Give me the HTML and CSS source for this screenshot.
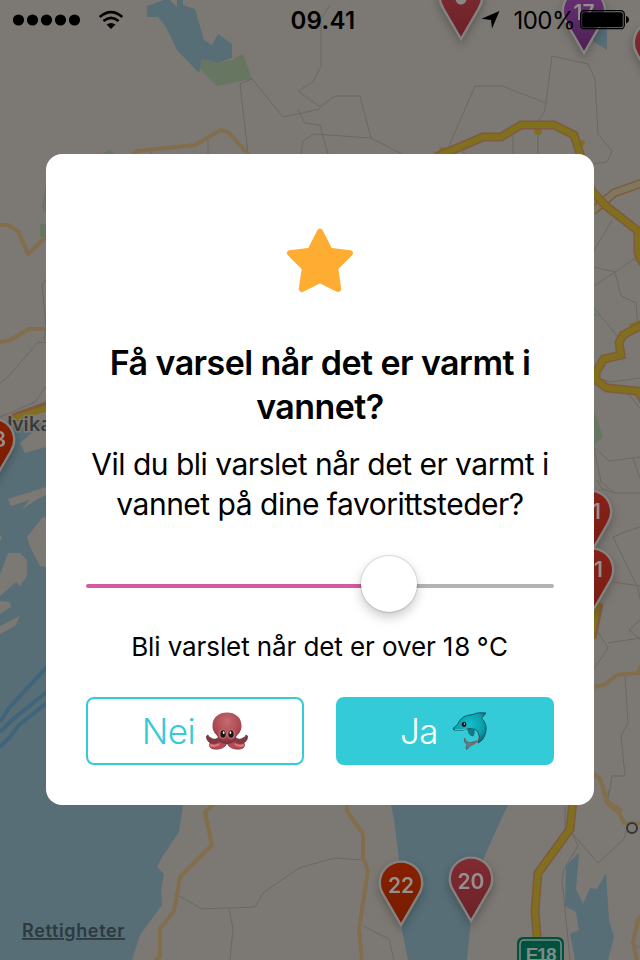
FILE: index.html
```html
<!DOCTYPE html>
<html lang="no">
<head>
    <meta charset="UTF-8">
    <meta name="viewport" content="width=device-width, initial-scale=1.0">
    <title>Varsel</title>
    <link rel="stylesheet" href="styles.css">
</head>
<body>
    <svg class="map" viewBox="0 0 640 960" width="640" height="960">
        <defs>
            <path id="pin" d="M0 -1L-18 -32A21.2 21.2 0 1 1 18 -32Z"/>
            <linearGradient id="orange" x1="0" y1="0" x2="0" y2="1"><stop offset="0" stop-color="#882100"/><stop offset="1" stop-color="#751c00"/></linearGradient>
            <linearGradient id="red" x1="0" y1="0" x2="0" y2="1"><stop offset="0" stop-color="#882117"/><stop offset="1" stop-color="#761d15"/></linearGradient>
            <linearGradient id="crimson" x1="0" y1="0" x2="0" y2="1"><stop offset="0" stop-color="#802b32"/><stop offset="1" stop-color="#6b2227"/></linearGradient>
            <linearGradient id="purple" x1="0" y1="0" x2="0" y2="1"><stop offset="0" stop-color="#693174"/><stop offset="1" stop-color="#4c2054"/></linearGradient>
        </defs>

        <!-- water -->
        <g class="water">
            <path d="M147 6L164 0H170L177 7V0H183V5L195 9L204 40L212 45L218 34L232 44V58L218 63L202 59L199 73L177 50L166 27L158 17H147Z"/>
            <path d="M604 0L607 10V50L594 42L580 28Z"/>
            <path d="M0 431L30 424L60 420V780H186L183 805L179 832L162 857L157 867L164 874L161 890L162 905L140 935L132 960H0Z"/>
            <path d="M390 800H511L503 815L483 860L471 920L467 960H408L399 915L400 868L394 819Z"/>
            <path d="M579 853L566 865L565 906L576 912L579 930L570 934L575 960H608L614 937L609 920L606 873L597 889L590 888L583 904L576 889Z"/>
        </g>
        <g class="shoal">
            <path d="M60 427L33 432L20 443L25 453L60 443Z"/>
            <path d="M8 499L46 487V495L36 500L21 510L30 500L11 506Z"/>
            <path d="M46 517L42 518L27 537L31 549L40 566L60 569V517Z"/>
            <path d="M8 553H20L27 560V576L20 586L16 582L0 596V575Z"/>
            <path d="M0 601L10 602L11 607L0 614ZM0 626L20 616L15 626L0 634Z"/>
            <path d="M0 535L2 538L0 541Z"/>
        </g>
        <path class="ferry" d="M0 722L9 708L47 667M0 732L12 720L48 691M0 747L11 736L19 725L48 702"/>

        <!-- parks -->
        <g class="park">
            <path d="M202 59L218 63L232 60L243 54L252 79L217 86L200 69Z"/>
            <path d="M46 183L42 207L48 218M46 224H40V237H48ZM102 154L109 150L115 154Z"/>
            <path d="M593 407L603 437L593 446ZM593 311L598 316H593Z"/>
        </g>

        <!-- small roads -->
        <path class="lane" d="M252 79L283 117L320 109M252 79L240 84L248 154M208 140V154M320 68L313 82L298 91L320 107L335 96H360L371 138L402 154M298 110L305 123L320 125L328 154M301 154L303 141L314 134L371 138M449 146L475 86H502L546 103L552 56L588 64L595 79L598 134L612 151L607 162L594 164M546 103L544 113L538 121V154M513 135V154M464 151V154M152 152L150 155M320 20L330 5M321 20V68"/>
        <path class="lane" d="M0 383L8 377L38 342L48 343M44 340L46 327L42 285L48 277M0 417L35 402L48 383"/>
        <path class="lane" d="M594 251L612 220M594 267L615 272L634 259L640 265M594 286L615 272L621 296L636 303L638 328M594 308L619 338M597 378L611 382L640 378M628 394L640 408M593 446L609 461L640 457M633 458L640 478M594 448L601 482L615 493H640M597 480L602 489L615 493M594 669L608 648L598 632V610M608 643L640 638M613 537L638 588L640 599M613 537L625 532L640 527M613 582L640 586M640 620L629 630L640 639M625 676L628 723L621 736L625 776H612L608 801"/>
        <path class="lane" d="M179 896L202 909L255 907L264 892L299 868L320 862L335 858L363 860M229 909L233 928L230 960M363 926L389 939L394 960M572 833L598 863L624 839L627 829M572 833L578 846L564 869L562 880L570 960M565 807V828M609 790L606 804M633 947H640"/>

        <!-- country roads -->
        <g class="road">
            <path d="M132 155L137 151L195 145L221 130L229 133L248 154"/>
            <path d="M0 225H8L18 231L28 254L46 237M0 342L8 341L29 329H48"/>
            <path d="M214 804L205 812L212 845L180 877L174 911L160 929V957L155 960"/>
            <path d="M347 804V811L363 834V858L368 870L359 930L362 960"/>
            <path d="M594 687L604 685L617 675L638 673L642 663M593 773L600 779L608 802L622 811M603 789L607 803L620 814L624 823H640M642 915L638 920L633 942L637 960"/>
        </g>

        <!-- motorways -->
        <g class="yellow"><circle cx="538" cy="131" r="4"/><circle cx="443" cy="151" r="4"/><circle cx="582" cy="143" r="3"/><path d="M634 257L640 250V265ZM628 325L640 320V328Z"/></g>
        <path class="pale-case" d="M593 211L614 193L642 183"/>
        <path class="pale" d="M593 211L614 193L642 183"/>
        <g class="motorway-case">
            <path d="M436 157L483 137H501L521 125H554L574 135L582 160L591 190L606 206L638 231V252L643 264M642 325L623 335L619 343L621 355L604 359L596 372V380L607 388L638 391L645 403M13 418L47 406M592 638L599 603M573 800L570 829L538 873L535 911L539 960"/>
        </g>
        <g class="motorway">
            <path d="M436 157L483 137H501L521 125H554L574 135L582 160L591 190L606 206L638 231V252L643 264M642 325L623 335L619 343L621 355L604 359L596 372V380L607 388L638 391L645 403M13 419L47 408M591 637L598 603M573 800L570 829L538 873L535 911L539 960"/>
        </g>
        <circle class="town" cx="632" cy="828" r="5"/>
        <text class="place" x="7" y="431">lvika</text>

        <rect x="517" y="937" width="47" height="34" rx="6" fill="#00523e"/>
        <rect x="520" y="940" width="41" height="31" rx="4" fill="#00523e" stroke="#7f8b86" stroke-width="1.5"/>
        <text class="shield" x="540.5" y="961">E18</text>

        <!-- temperature pins -->
        <g class="pin" transform="translate(461 40)"><use href="#pin" fill="url(#crimson)"/><circle cy="-41" r="5.5" fill="#8a8785"/></g>
        <g class="pin" transform="translate(584 54)"><use href="#pin" fill="url(#purple)"/><text y="-34">17</text></g>
        <g class="pin" transform="translate(655 86)"><use href="#pin" fill="url(#crimson)"/></g>
        <g class="pin" transform="translate(-7 483)"><use href="#pin" fill="url(#orange)"/><text y="-36">23</text></g>
        <g class="pin" transform="translate(590 555)"><use href="#pin" fill="url(#red)"/><text y="-36">21</text></g>
        <g class="pin" transform="translate(592 613)"><use href="#pin" fill="url(#red)"/><text y="-36">21</text></g>
        <g class="pin" transform="translate(401 926)"><use href="#pin" fill="url(#orange)"/><text y="-33">22</text></g>
        <g class="pin" transform="translate(471 922)"><use href="#pin" fill="url(#crimson)"/><text y="-33">20</text></g>
        <text class="legal" x="22" y="937">Rettigheter</text>
    </svg>

    <div class="screen">
        <header class="status">
            <div class="status-left">
                <svg width="68" height="12" viewBox="0 0 68 12"><circle cx="5.5" cy="6" r="5.6"/><circle cx="19.5" cy="6" r="5.6"/><circle cx="33.5" cy="6" r="5.6"/><circle cx="47.5" cy="6" r="5.6"/><circle cx="61.5" cy="6" r="5.6"/></svg>
                <svg class="wifi" width="26" height="20" viewBox="0 0 26 20"><path d="M1.7 7.1Q13 -2.8 24.3 7.1M5.4 11Q13 4.6 20.6 11" fill="none" stroke="#000" stroke-width="2.6"/><path d="M8.5 14.6Q13 11.2 17.5 14.6L13 19Z"/></svg>
            </div>
            <div class="time">09.41</div>
            <div class="status-right">
                <svg width="19" height="18" viewBox="0 0 19 18"><path d="M18.5 0L11 17.5L10 9L0.5 7.7Z"/></svg>
                <span>100%</span>
                <svg width="49" height="20" viewBox="0 0 49 20"><rect x="0.7" y="0.7" width="43.6" height="18" rx="3.5" fill="none" stroke="#000" stroke-width="1.3"/><rect x="2.2" y="2.2" width="40.6" height="15" rx="2"/><path d="M46 6Q49 7 49 9.7T46 13.4Z"/></svg>
            </div>
        </header>

        <main class="dialog">
            <svg class="star" width="68" height="66" viewBox="0 0 68 66"><path d="M34 4.7L43.8 23.8L64 26.2L49.2 41L52.2 62L34 53L15.8 62L18.8 41L4 26.2L24.2 23.8Z" fill="#ffac33" stroke="#ffac33" stroke-width="6" stroke-linejoin="round"/></svg>
            <h1>Få varsel når det er varmt i<br>vannet?</h1>
            <p class="question">Vil du bli varslet når det er varmt i<br>vannet på dine favorittsteder?</p>
            <div class="slider">
                <div class="filled"></div>
                <div class="knob"></div>
                <div class="rest"></div>
            </div>
            <p class="hint">Bli varslet når det er over <span>18&#8201;°C</span></p>
            <div class="buttons">
                <button class="no">
                    <span>Nei</span>
                    <svg width="42" height="38" viewBox="0 0 42 38">
                        <defs><radialGradient id="skin" cx=".5" cy=".3" r=".7"><stop offset="0" stop-color="#c66b70"/><stop offset=".65" stop-color="#ab4852"/><stop offset="1" stop-color="#71303a"/></radialGradient></defs>
                        <path d="M13 25Q9 29 5 26Q2 25 2 23L.5 24Q0 31 9 32Q15 32 17 26M29 25Q33 29 37 26Q40 25 40 23L41.5 24Q42 31 33 32Q27 32 25 26" fill="#823940" stroke="#63303a" stroke-width=".8"/>
                        <path d="M16 27Q11 33 4 31Q2 36 8 37Q18 38 21 31Q24 38 34 37Q40 36 38 31Q31 33 26 27Z" fill="#b84c54" stroke="#793540" stroke-width=".8"/>
                        <path d="M4 33Q9 35 13 32M38 33Q33 35 29 32" stroke="#ec777b" stroke-width="2" fill="none"/>
                        <path d="M6.5 14C6.5 5 13 .5 21 .5S35.5 5 35.5 14C35.5 20 32 22 30 25L28 30Q21 34 14 30L12 25C10 22 6.5 20 6.5 14Z" fill="url(#skin)"/>
                        <ellipse cx="16.8" cy="22" rx="4.2" ry="5" fill="#c9686b"/><ellipse cx="25.2" cy="22" rx="4.2" ry="5" fill="#c9686b"/>
                        <ellipse cx="17" cy="22" rx="2.6" ry="3.8" fill="#171717"/><ellipse cx="25" cy="22" rx="2.6" ry="3.8" fill="#171717"/>
                        <ellipse cx="17.7" cy="20.7" rx=".9" ry="1.4" fill="#eee"/><ellipse cx="24.4" cy="20.7" rx=".9" ry="1.4" fill="#eee"/>
                    </svg>
                </button>
                <button class="yes">
                    <span>Ja</span>
                    <svg width="36" height="38" viewBox="0 0 36 38">
                        <defs><radialGradient id="body" cx=".5" cy=".4" r=".65"><stop offset="0" stop-color="#12c1ce"/><stop offset=".65" stop-color="#0b9eab"/><stop offset="1" stop-color="#165f6a"/></radialGradient></defs>
                        <path d="M24 17Q29 24 25 28Q21 31 15 31L19 34Q28 32 31 25Q30 20 24 17Z" fill="#8b9293"/>
                        <path d="M1 16.5L5.5 12.5Q9 3 21 2.5Q25 0 34 1Q32 4 29.5 6Q36 13 33.5 21Q32 28 26 31Q29 25 26 20Q24 16.5 18 16.5Q10 19 2 18Z" fill="url(#body)" stroke="#145b65" stroke-width="1"/>
                        <path d="M22 29.5Q19 31 17 30.5Q14 30 12.5 26Q11 30 15 32.5Q13 35 14.5 37.5Q18 35 19 33Q23 32 25 29Z" fill="#70787b" stroke="#4e5c60" stroke-width=".7"/>
                        <path d="M16 17Q16 23 21 24Q23 21 22 18Z" fill="#07808c" stroke="#145b65" stroke-width=".7"/>
                        <path d="M3 17.5Q10 18 15 17" stroke="#8ba8aa" fill="none"/>
                        <circle cx="12" cy="12.5" r="2.4" fill="#111"/><circle cx="12.5" cy="12" r=".8" fill="#ddd"/>
                    </svg>
                </button>
            </div>
        </main>
    </div>
</body>
</html>
```
FILE: styles.css
```css
* {
    box-sizing: border-box;
}
body {
    margin: 0;
    background: #7c7974;
    font-family: Inter, "Liberation Sans", sans-serif;
    color: #000;
}
svg {
    display: block;
}
/* the map lies dimmed behind the dialog */
.map {
    position: absolute;
    top: 0;
    left: 0;
    z-index: -1;
}
.water {
    fill: #576e77;
}
.shoal {
    fill: #7c7974;
}
.ferry {
    fill: none;
    stroke: #40647b;
    stroke-width: 4;
}
.park {
    fill: #667661;
}
.lane {
    fill: none;
    stroke: #6a6863;
    stroke-width: 1;
}
.road {
    fill: none;
    stroke: #826e4c;
    stroke-width: 4;
}
.yellow {
    fill: #80701e;
}
.motorway, .motorway-case, .pale, .pale-case {
    fill: none;
    stroke: #80701e;
    stroke-width: 6;
}
.motorway-case, .pale-case {
    stroke: #80593f;
    stroke-width: 9;
}
.pale {
    stroke: #7e795e;
}
.town {
    fill: #7c7974;
    stroke: #353535;
    stroke-width: 2;
}
.place {
    font: 600 20px "Open Sans", sans-serif;
    fill: #383838;
    stroke: #7c7974;
    stroke-width: 3;
    paint-order: stroke;
}
.shield {
    font: bold 19px "Liberation Sans", sans-serif;
    letter-spacing: -1.5px;
    fill: #818a86;
    text-anchor: middle;
}
.pin {
    filter: drop-shadow(0 4px 4px rgba(0, 0, 0, 0.25));
}
.pin use {
    stroke: #85827f;
    stroke-width: 2.4;
}
.pin text {
    font-size: 21px;
    font-weight: 600;
    fill: #95908e;
    text-anchor: middle;
}
.legal {
    font-size: 18px;
    font-weight: 600;
    letter-spacing: 0.65px;
    fill: #2c3a3f;
    text-decoration: underline;
}
.screen {
    display: flex;
    flex-direction: column;
    align-items: center;
    height: 960px;
}
.status {
    display: grid;
    grid-template-columns: 1fr auto 1fr;
    align-items: center;
    width: 100%;
    height: 40px;
    padding: 0 11px 0 13px;
    font-size: 24px;
}
.status-left, .status-right {
    display: flex;
    align-items: center;
}
.wifi {
    margin-left: 17px;
}
.time {
    padding: 1px 0 0 4px;
    font-weight: 600;
    letter-spacing: 0.3px;
}
.status-right {
    justify-content: flex-end;
}
.status-right span {
    margin: 1px 5px 0 13px;
    letter-spacing: -0.5px;
}
.dialog {
    display: flex;
    flex-direction: column;
    align-items: center;
    width: 548px;
    height: 651px;
    margin-top: 114px;
    padding: 73px 40px 40px;
    background: #fff;
    border-radius: 16px;
    text-align: center;
    white-space: nowrap;
}
h1 {
    margin: 48px 0 0;
    font-size: 34px;
    font-weight: 600;
    line-height: 44px;
    letter-spacing: -0.55px;
}
.question {
    margin: 15px 0 0;
    font-size: 30px;
    line-height: 40px;
    letter-spacing: -0.5px;
    font-variant-ligatures: none;
}
.slider {
    display: flex;
    align-items: center;
    width: 100%;
    height: 56px;
    margin-top: 32px;
}
.filled {
    width: 276px;
    height: 4px;
    margin-top: 4px;
    background: #d35ba3;
    border-radius: 2px 0 0 2px;
}
.knob {
    width: 56px;
    height: 56px;
    margin: 0 -1px;
    border-radius: 50%;
    background: #fff;
    box-shadow: 0 0 1px 1px rgba(0, 0, 0, 0.12), 0 5px 12px rgba(0, 0, 0, 0.22);
    z-index: 1;
}
.rest {
    flex: 1;
    height: 4px;
    margin-top: 4px;
    background: #b3b3b3;
    border-radius: 0 2px 2px 0;
}
.hint {
    margin: 19px 0 0;
    font-size: 26px;
    line-height: 32px;
    letter-spacing: -0.1px;
}
.hint span {
    letter-spacing: 0.8px;
}
.buttons {
    display: grid;
    grid-template-columns: 1fr 1fr;
    gap: 32px;
    width: 100%;
    margin-top: auto;
}
button {
    display: flex;
    align-items: center;
    justify-content: center;
    gap: 11px;
    height: 68px;
    padding: 0;
    border: 2px solid #34cbd9;
    border-radius: 8px;
    background: #fff;
    color: #34cbd9;
    font-family: inherit;
    font-size: 35px;
    font-weight: 300;
    letter-spacing: -0.5px;
}
.yes {
    gap: 14px;
    padding-right: 2px;
    background: #34cbd9;
    color: #fff;
}
```
